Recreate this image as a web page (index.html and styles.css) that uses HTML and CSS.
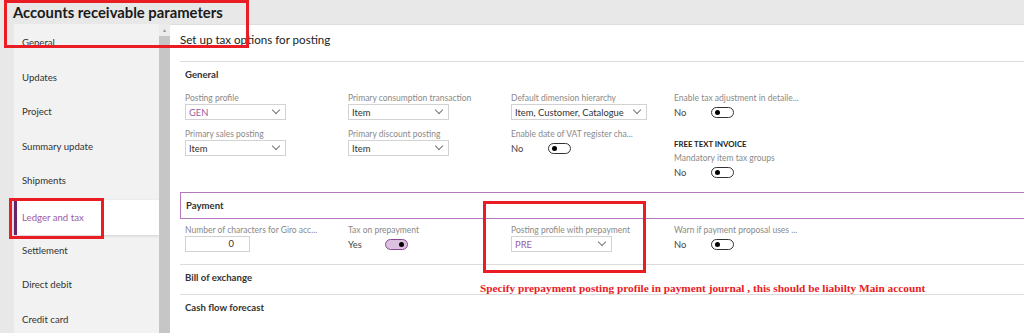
FILE: index.html
```html
<!DOCTYPE html>
<html lang="en">
<head>
    <meta charset="UTF-8">
    <title>Accounts receivable parameters</title>
    <link rel="stylesheet" href="styles.css">
</head>
<body>
    <h1 class="page-title">Accounts receivable parameters</h1>

    <div class="layout">
        <nav class="side-nav">
            <div class="nav-item">General</div>
            <div class="nav-item">Updates</div>
            <div class="nav-item">Project</div>
            <div class="nav-item">Summary update</div>
            <div class="nav-item">Shipments</div>
            <div class="nav-item active">Ledger and tax</div>
            <div class="nav-item">Settlement</div>
            <div class="nav-item">Direct debit</div>
            <div class="nav-item">Credit card</div>
        </nav>
        <div class="scrollbar">
            <div class="scroll-arrow">&#9650;</div>
            <div class="scroll-thumb"></div>
        </div>

        <main class="content">
            <div class="content-header">Set up tax options for posting</div>

            <section class="section">
                <div class="section-title">General</div>
                <div class="field-grid">
                    <div class="field-col">
                        <div class="field">
                            <label>Posting profile</label>
                            <div class="select w-100"><span class="accent">GEN</span><span class="chevron"></span></div>
                        </div>
                        <div class="field">
                            <label>Primary sales posting</label>
                            <div class="select w-100"><span>Item</span><span class="chevron"></span></div>
                        </div>
                    </div>
                    <div class="field-col">
                        <div class="field">
                            <label>Primary consumption transaction</label>
                            <div class="select w-100"><span>Item</span><span class="chevron"></span></div>
                        </div>
                        <div class="field">
                            <label>Primary discount posting</label>
                            <div class="select w-100"><span>Item</span><span class="chevron"></span></div>
                        </div>
                    </div>
                    <div class="field-col">
                        <div class="field">
                            <label>Default dimension hierarchy</label>
                            <div class="select w-136"><span>Item, Customer, Catalogue</span><span class="chevron"></span></div>
                        </div>
                        <div class="field">
                            <label>Enable date of VAT register cha...</label>
                            <div class="toggle-row"><span>No</span><span class="toggle"></span></div>
                        </div>
                    </div>
                    <div class="field-col">
                        <div class="field">
                            <label>Enable tax adjustment in detaile...</label>
                            <div class="toggle-row"><span>No</span><span class="toggle"></span></div>
                        </div>
                        <div class="group-title">FREE TEXT INVOICE</div>
                        <div class="field">
                            <label>Mandatory item tax groups</label>
                            <div class="toggle-row"><span>No</span><span class="toggle"></span></div>
                        </div>
                    </div>
                </div>
            </section>

            <section class="section open">
                <div class="section-title payment">Payment</div>
                <div class="field-grid payment-fields">
                    <div class="field">
                        <label>Number of characters for Giro acc...</label>
                        <div class="number-input">0</div>
                    </div>
                    <div class="field">
                        <label>Tax on prepayment</label>
                        <div class="toggle-row"><span>Yes</span><span class="toggle on"></span></div>
                    </div>
                    <div class="field">
                        <label>Posting profile with prepayment</label>
                        <div class="select w-100"><span class="accent">PRE</span><span class="chevron"></span></div>
                    </div>
                    <div class="field">
                        <label>Warn if payment proposal uses ...</label>
                        <div class="toggle-row"><span>No</span><span class="toggle"></span></div>
                    </div>
                </div>
            </section>

            <section class="section collapsed">
                <div class="section-title">Bill of exchange</div>
            </section>
            <section class="section collapsed last">
                <div class="section-title">Cash flow forecast</div>
            </section>
        </main>
    </div>

    <!-- annotations drawn over the screenshot -->
    <div class="mark mark-title"></div>
    <div class="mark mark-nav"></div>
    <div class="mark mark-prepay"></div>
    <div class="note">Specify prepayment posting profile in payment journal , this should be liabilty Main account</div>
</body>
</html>
```

FILE: styles.css
```css
:root {
    --page-bg: #e8e8e8;
    --nav-bg: #f2f2f2;
    --text-color: #333;
    --label-color: #8a8a8a;
    --accent-color: #9b5ba5;
    --purple-dark: #68246f;
    --purple-line: #b679c0;
    --line-color: #dcdcdc;
    --mark-color: #ea1c24;
}

body {
    margin: 0;
    padding: 0;
    background-color: var(--page-bg);
    font-family: 'Lato', sans-serif;
    color: var(--text-color);
    height: 333px;
    overflow: hidden;
    position: relative;
}

.page-title {
    margin: 0;
    padding: 3px 0 0 13px;
    height: 21px;
    font-size: 14.8px;
    font-weight: 700;
    line-height: 18px;
    color: #1a1a1a;
}

.layout {
    display: flex;
    height: 309px;
}

.side-nav {
    margin-left: 14px;
    width: 145px;
    background-color: var(--nav-bg);
    padding-top: 1px;
}

.nav-item {
    height: 34.6px;
    line-height: 35px;
    padding-left: 8px;
    font-size: 9.6px;
    color: #333;
}

.nav-item.active {
    background-color: white;
    color: var(--accent-color);
    box-shadow: 0 1px 3px rgba(0,0,0,0.15);
    border-left: 3px solid var(--purple-dark);
    padding-left: 5px;
    margin-top: 2px;
    margin-bottom: -2px;
}

.scrollbar {
    width: 11px;
    display: flex;
    flex-direction: column;
    background-color: #ececec;
}

.scroll-arrow {
    height: 12px;
    font-size: 5px;
    line-height: 12px;
    text-align: center;
    color: #999;
}

.scroll-thumb {
    flex: 1;
    background-color: #c6c6c6;
}

.content {
    flex: 1;
    background-color: white;
    padding-left: 10px;
    border-top: 1px solid #dedede;
}

.content-header {
    height: 36px;
    line-height: 30px;
    font-size: 11.6px;
    color: #222;
    border-bottom: 1px solid var(--line-color);
}

.section {
    padding-left: 5px;
}

.section-title {
    font-size: 9.6px;
    font-weight: 700;
    color: #333;
    padding: 5px 0;
    line-height: 15px;
}

.field-grid {
    display: grid;
    grid-template-columns: repeat(4, 163px);
    padding-top: 6px;
    padding-bottom: 4px;
}

.field-col {
    display: flex;
    flex-direction: column;
    gap: 9px;
}

.field label {
    display: block;
    font-size: 8.5px;
    line-height: 11px;
    color: var(--label-color);
    white-space: nowrap;
}

.select {
    height: 16px;
    border: 1px solid #d2d2d2;
    box-sizing: border-box;
    display: flex;
    align-items: center;
    justify-content: space-between;
    padding: 0 6px 0 3px;
    font-size: 9.4px;
    color: #333;
    white-space: nowrap;
}

.w-100 {
    width: 101px;
}

.w-136 {
    width: 136px;
}

.accent {
    color: var(--accent-color);
}

.chevron {
    width: 5px;
    height: 5px;
    border-right: 1px solid #777;
    border-bottom: 1px solid #777;
    transform: rotate(45deg);
    margin-top: -4px;
}

.toggle-row {
    display: flex;
    align-items: center;
    height: 16px;
    font-size: 9.4px;
    color: #444;
}

.toggle-row span:first-child {
    width: 37px;
}

.toggle {
    width: 21px;
    height: 9px;
    border: 1px solid #333;
    border-radius: 6px;
    position: relative;
}

.toggle::after {
    content: "";
    position: absolute;
    left: 3px;
    top: 2px;
    width: 5px;
    height: 5px;
    border-radius: 50%;
    background-color: #000;
}

.toggle.on {
    background-color: #dcc0e0;
    border-color: #8a4a92;
}

.toggle.on::after {
    left: auto;
    right: 3px;
}

.group-title {
    font-size: 7.8px;
    font-weight: 700;
    color: #222;
    margin-top: 10px;
    margin-bottom: -5px;
}

.section.open {
    padding-left: 0;
    margin-top: 8px;
}

.section-title.payment {
    border: 1px solid var(--purple-line);
    border-right: none;
    padding: 5px 5px;
}

.payment-fields {
    padding-left: 5px;
    padding-top: 6px;
    border-bottom: 1px solid var(--line-color);
    height: 32px;
    padding-bottom: 7px;
}

.number-input {
    width: 65px;
    height: 16px;
    box-sizing: border-box;
    border: 1px solid #d2d2d2;
    text-align: right;
    padding-right: 15px;
    font-size: 9.4px;
    line-height: 14px;
}

.section.collapsed {
    padding-left: 0;
    border-bottom: 1px solid var(--line-color);
}

.section.collapsed.last {
    border-bottom: none;
}

.section.collapsed .section-title {
    padding: 5px 5px 9px;
}

.mark {
    position: absolute;
    border: 3px solid var(--mark-color);
    box-sizing: border-box;
}

.mark-title {
    left: 4px;
    top: 0;
    width: 245px;
    height: 48px;
}

.mark-nav {
    left: 9px;
    top: 198px;
    width: 95px;
    height: 41px;
}

.mark-prepay {
    left: 483px;
    top: 201px;
    width: 163px;
    height: 72px;
}

.note {
    position: absolute;
    left: 480px;
    top: 282px;
    font-family: 'Liberation Serif', serif;
    font-weight: 700;
    font-size: 11.3px;
    color: var(--mark-color);
    white-space: nowrap;
}
```
